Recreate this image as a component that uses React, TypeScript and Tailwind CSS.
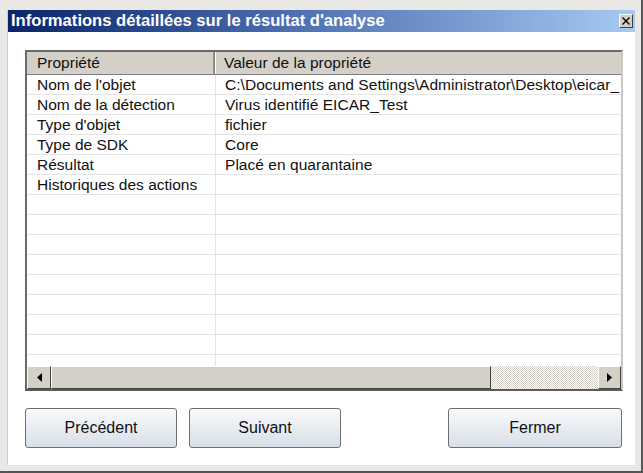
import React from "react";

const rows: [string, string][] = [
  ["Nom de l'objet", "C:\\Documents and Settings\\Administrator\\Desktop\\eicar_"],
  ["Nom de la détection", "Virus identifié EICAR_Test"],
  ["Type d'objet", "fichier"],
  ["Type de SDK", "Core"],
  ["Résultat", "Placé en quarantaine"],
  ["Historiques des actions", ""],
];

const allRows: [string, string][] = [...rows];
while (allRows.length < 16) allRows.push(["", ""]);

function Btn({ label, w }: { label: string; w: string }) {
  return (
    <div
      className={`${w} h-[40px] flex items-center justify-center border border-[#6f6f6f] rounded-[3px] bg-gradient-to-b from-[#f9fafc] to-[#d8dfe8] text-[16px] text-[#111]`}
    >
      {label}
    </div>
  );
}

export default function App() {
  return (
    <div
      className="w-[643px] h-[473px] bg-[#e9e8e4] pt-[10px] pl-[7px] pr-[6px] pb-[6px] border-r-2 border-b-2 border-[#555]"
      style={{ fontFamily: '"Liberation Sans", Arial, sans-serif' }}
    >
      <div className="w-full h-full flex flex-col border-l border-[#cfcdc6]">
        {/* Title bar */}
        <div className="h-[22px] shrink-0 flex items-center justify-between bg-gradient-to-r from-[#0a246a] via-[#5577b8] to-[#a6caf0] pl-[3px] pr-[2px]">
          <span className="text-white font-bold text-[16.6px] leading-none">
            Informations détaillées sur le résultat d'analyse
          </span>
          <div className="w-[14px] h-[14px] bg-[#d4d0c8] border-t border-l border-t-white border-l-white border-r border-b border-r-[#404040] border-b-[#404040] flex items-center justify-center">
            <svg width="8" height="8" viewBox="0 0 8 8">
              <path d="M0.5 0.5 L7.5 7.5 M7.5 0.5 L0.5 7.5" stroke="#000" strokeWidth="1.4" />
            </svg>
          </div>
        </div>
        {/* Content */}
        <div className="flex-1 bg-white flex flex-col pl-[17px] pr-[13px] pt-[18px]">
          {/* List view */}
          <div className="w-[598px] h-[341px] border-2 border-t-[#6a6a6a] border-l-[#6a6a6a] border-b-[#5a5a5a] border-r-[#c8c8c8] flex flex-col overflow-hidden">
            <div className="flex-1 overflow-hidden bg-white">
              {/* header */}
              <div className="flex h-[23px] bg-[#d4d0c8] border-b border-[#808080] text-[15.5px] text-[#111]">
                <div className="w-[188px] shrink-0 pl-[10px] flex items-center border-r border-[#808080] shadow-[inset_-1px_0_0_#9a968e]">
                  Propriété
                </div>
                <div className="flex-1 pl-[8px] flex items-center border-l border-white">
                  Valeur de la propriété
                </div>
              </div>
              {allRows.map((r, i) => (
                <div key={i} className="flex h-[20px] border-b border-[#e4e4e4] text-[15.5px] text-[#111] whitespace-nowrap">
                  <div className="w-[189px] shrink-0 pl-[10px] flex items-center border-r border-[#e4e4e4] overflow-hidden">
                    {r[0]}
                  </div>
                  <div className="flex-1 pl-[9px] flex items-center overflow-hidden tracking-[0.04px]">{r[1]}</div>
                </div>
              ))}
            </div>
            {/* Scrollbar */}
            <div className="h-[23px] shrink-0 flex bg-[repeating-conic-gradient(#d4d0c8_0%_25%,#ffffff_0%_50%)] bg-[length:2px_2px]">
              <div className="w-[24px] h-full bg-[#d4d0c8] border-t border-l border-white border-r border-b border-r-[#404040] border-b-[#404040] flex items-center justify-center">
                <svg width="5" height="9" viewBox="0 0 5 9">
                  <path d="M5 0 L0 4.5 L5 9 Z" fill="#000" />
                </svg>
              </div>
              <div className="w-[440px] h-full bg-[#d4d0c8] border-t border-l border-white border-r border-b border-r-[#404040] border-b-[#404040]" />
              <div className="flex-1" />
              <div className="w-[23px] h-full bg-[#d4d0c8] border-t border-l border-white border-r border-b border-r-[#404040] border-b-[#404040] flex items-center justify-center">
                <svg width="5" height="9" viewBox="0 0 5 9">
                  <path d="M0 0 L5 4.5 L0 9 Z" fill="#000" />
                </svg>
              </div>
            </div>
          </div>
          {/* Buttons */}
          <div className="flex mt-[17px]">
            <Btn label="Précédent" w="w-[152px]" />
            <div className="w-[12px]" />
            <Btn label="Suivant" w="w-[152px]" />
            <div className="flex-1" />
            <Btn label="Fermer" w="w-[174px]" />
          </div>
        </div>
      </div>
    </div>
  );
}
